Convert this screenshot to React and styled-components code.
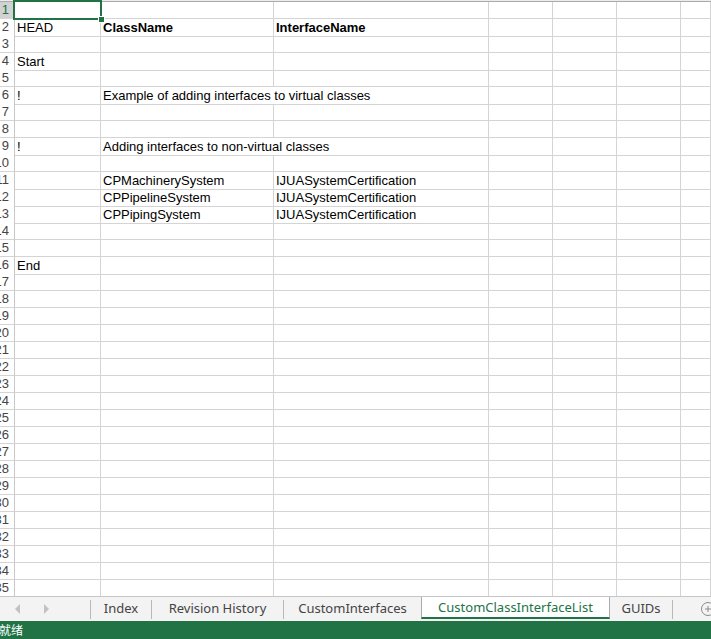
import styled, { createGlobalStyle } from 'styled-components'

const GlobalStyle = createGlobalStyle`
    html, body {
        margin: 0;
        padding: 0;
        overflow: hidden;
        background: #fff;
    }
`

const rows = {
    2: [['HEAD'], ['ClassName', { bold: true }], ['InterfaceName', { bold: true }]],
    4: [['Start']],
    6: [['!'], ['Example of adding interfaces to virtual classes', { span: 2 }]],
    9: [['!'], ['Adding interfaces to non-virtual classes', { span: 2 }]],
    11: [[''], ['CPMachinerySystem'], ['IJUASystemCertification']],
    12: [[''], ['CPPipelineSystem'], ['IJUASystemCertification']],
    13: [[''], ['CPPipingSystem'], ['IJUASystemCertification']],
    16: [['End']],
}

const COLS = 7

function buildRow(n) {
    const data = rows[n] || []
    const cells = []
    let col = 0
    data.forEach(([text, opts = {}]) => {
        const span = opts.span || 1
        cells.push({ text, bold: opts.bold, span, col })
        col += span
    })
    while (col < COLS) {
        cells.push({ text: '', span: 1, col })
        col += 1
    }
    return cells
}

function App() {
    const rowNums = Array.from({ length: 35 }, (_, i) => i + 1)
    return (
        <Window>
            <GlobalStyle />
            <Sheet>
                <HeaderStrip />
                <Grid>
                    {rowNums.map(n => (
                        <Row key={n}>
                            <RowHead selected={n === 1}>{n}</RowHead>
                            {buildRow(n).map(c => (
                                <Cell key={c.col} span={c.span} bold={c.bold}>
                                    {c.text}
                                    {n === 1 && c.col === 0 && (
                                        <Selection>
                                            <Handle />
                                        </Selection>
                                    )}
                                </Cell>
                            ))}
                        </Row>
                    ))}
                </Grid>
            </Sheet>
            <TabBar>
                <Nav>
                    <svg width="6" height="10" viewBox="0 0 6 10">
                        <path d="M5 0 L0 5 L5 10 Z" fill="#c2c2c2" />
                    </svg>
                    <svg width="6" height="10" viewBox="0 0 6 10">
                        <path d="M0 0 L5 5 L0 10 Z" fill="#c2c2c2" />
                    </svg>
                </Nav>
                <Divider />
                <Tab width={60}>Index</Tab>
                <Divider />
                <Tab width={131}>Revision History</Tab>
                <Divider />
                <Tab width={137}>CustomInterfaces</Tab>
                <ActiveTab>CustomClassInterfaceList</ActiveTab>
                <Tab width={62}>GUIDs</Tab>
                <Divider />
                <AddSheet>
                    <svg width="16" height="16" viewBox="0 0 16 16">
                        <circle cx="8" cy="8" r="6.5" fill="none" stroke="#8a8a8a" strokeWidth="1" />
                        <path d="M8 5 V11 M5 8 H11" stroke="#8a8a8a" strokeWidth="1" />
                    </svg>
                </AddSheet>
            </TabBar>
            <StatusBar>
                <StatusText>就绪</StatusText>
            </StatusBar>
        </Window>
    )
}

export default App

const Window = styled.div`
    display: flex;
    flex-direction: column;
    height: 100vh;
    width: 100vw;
    overflow: hidden;
    font-family: "Liberation Sans", Arial, sans-serif;
`

const Sheet = styled.div`
    flex: 1;
    overflow: hidden;
    min-height: 0;
`

const HeaderStrip = styled.div`
    height: 1px;
    background: #ececec;
`

const Grid = styled.div`
    border-top: 1px solid #ababab;
`

const Row = styled.div`
    display: grid;
    grid-template-columns: 15px 86px 173px 215px 64px 64px 64px 1fr;
    height: 17px;
`

const RowHead = styled.div`
    box-sizing: border-box;
    border-right: 1px solid #c8c8c8;
    border-bottom: 1px solid #d4d4d4;
    background: ${props => props.selected ? '#d2d2d2' : '#fff'};
    color: ${props => props.selected ? '#217346' : '#444'};
    font-family: "Liberation Sans", Arial, sans-serif;
    font-size: 13px;
    line-height: 16px;
    overflow: hidden;
    white-space: nowrap;
    direction: rtl;
    padding-right: 5px;
`

const Cell = styled.div`
    position: relative;
    box-sizing: border-box;
    grid-column: span ${props => props.span};
    border-right: 1px solid #d4d4d4;
    border-bottom: 1px solid #d4d4d4;
    padding: 1px 3px 0 2px;
    font-size: 13px;
    line-height: 16px;
    font-weight: ${props => props.bold ? 700 : 400};
    color: #000;
    white-space: nowrap;
`

const Selection = styled.div`
    position: absolute;
    left: -2px;
    top: -2px;
    width: 89px;
    height: 20px;
    box-sizing: border-box;
    border: 2px solid #217346;
    z-index: 2;
`

const Handle = styled.div`
    position: absolute;
    right: -5px;
    bottom: -5px;
    width: 5px;
    height: 5px;
    background: #217346;
    border: 1px solid #fff;
`

const TabBar = styled.div`
    flex: none;
    height: 24px;
    display: flex;
    align-items: stretch;
    overflow: hidden;
    background: #f3f3f3;
    border-top: 1px solid #c6c6c6;
    font-family: "Noto Sans", "Open Sans", sans-serif;
    font-size: 13px;
    color: #444;
    white-space: nowrap;

    & > * {
        flex-shrink: 0;
    }
`

const Nav = styled.div`
    width: 90px;
    display: flex;
    align-items: center;
    gap: 23px;
    padding-left: 15px;
    box-sizing: border-box;
`

const Divider = styled.div`
    width: 1px;
    height: 19px;
    margin-top: 3px;
    background: #b8b8b8;
`

const Tab = styled.div`
    width: ${props => props.width}px;
    display: flex;
    align-items: center;
    justify-content: center;
    padding-bottom: 2px;
    box-sizing: border-box;
`

const ActiveTab = styled.div`
    width: 189px;
    margin-top: -1px;
    height: 23px;
    box-sizing: border-box;
    display: flex;
    align-items: center;
    justify-content: center;
    background: #fff;
    color: #217346;
    border-left: 1px solid #ababab;
    border-right: 1px solid #ababab;
    border-bottom: 2px solid #217346;
`

const AddSheet = styled.div`
    display: flex;
    align-items: center;
    padding-left: 27px;
`

const StatusBar = styled.div`
    flex: none;
    height: 18px;
    background: #217346;
    display: flex;
    align-items: center;
    overflow: hidden;
`

const StatusText = styled.span`
    margin-left: -1px;
    color: #fff;
    font-family: "Noto Sans CJK SC", sans-serif;
    font-size: 12px;
    line-height: 18px;
`
